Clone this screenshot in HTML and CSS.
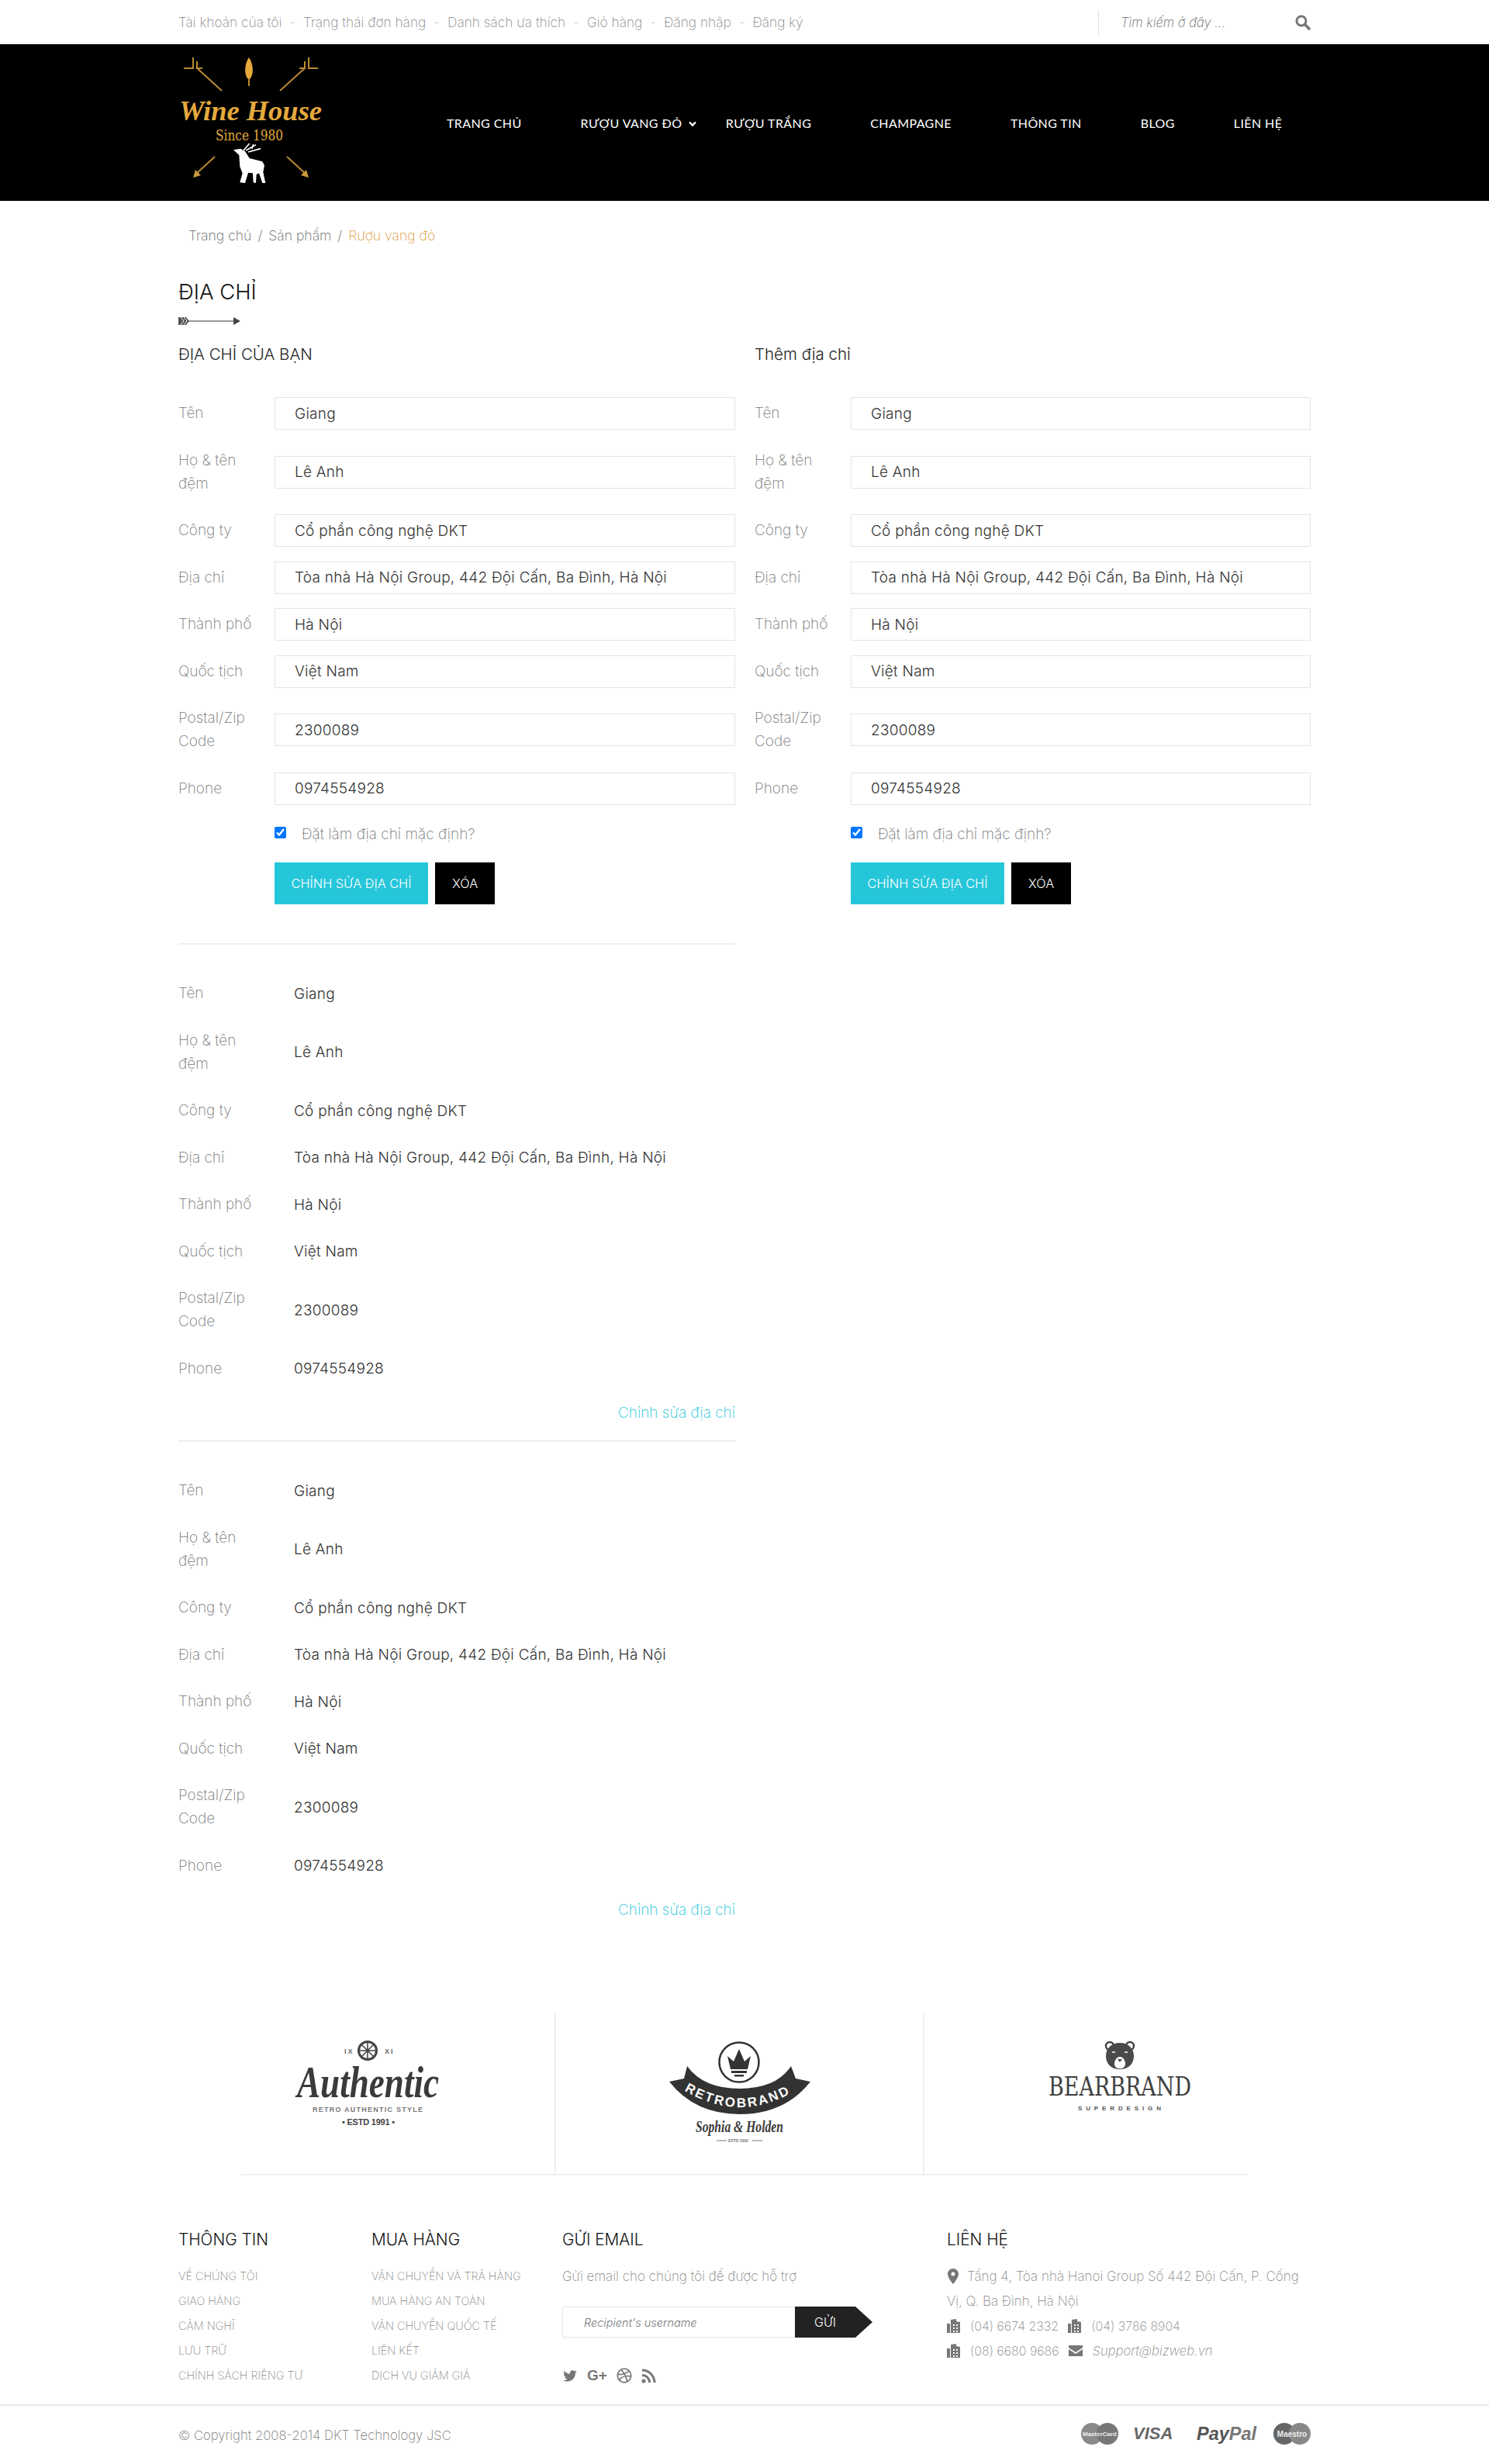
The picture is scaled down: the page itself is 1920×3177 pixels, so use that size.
FILE: index.html
```html
<!DOCTYPE html>
<html lang="vi">
<head>
    <meta charset="UTF-8">
    <title>Địa chỉ - Wine House</title>
    <link rel="stylesheet" href="styles.css">
</head>
<body>

    <!-- top bar -->
    <div class="topbar">
        <div class="wrap topbar-inner">
            <ul class="top-links">
                <li>Tài khoản của tôi</li>
                <li>Trạng thái đơn hàng</li>
                <li>Danh sách ưa thích</li>
                <li>Giỏ hàng</li>
                <li>Đăng nhập</li>
                <li>Đăng ký</li>
            </ul>
            <div class="search">
                <input type="text" placeholder="Tìm kiếm ở đây ...">
                <svg width="20" height="20" viewBox="0 0 20 20"><circle cx="8" cy="8" r="6" fill="none" stroke="#777" stroke-width="3"/><path d="M12.5 12.5L18 18" stroke="#777" stroke-width="3.6" stroke-linecap="round"/></svg>
            </div>
        </div>
    </div>

    <!-- header -->
    <div class="header">
        <div class="wrap header-inner">
            <svg class="logo" width="190" height="202" viewBox="0 0 190 202">
                <g stroke="#b98a33" stroke-width="2" fill="none">
                    <path d="M56 60L23 30"/>
                    <path d="M19 17V31H7M24 22V31H31"/>
                    <path d="M131 60L164 30"/>
                    <path d="M168 17V31H180M163 22V31H156"/>
                    <path d="M47 145L22 168"/>
                    <path d="M140 145L165 168"/>
                </g>
                <path d="M19 172L22 162L29 169Z" fill="#c99a3d"/>
                <path d="M168 172L165 162L158 169Z" fill="#c99a3d"/>
                <path d="M91 17C85 26 84 40 91 46C98 40 97 26 91 17Z" fill="#e5a93c"/>
                <rect x="90" y="44" width="2" height="10" fill="#b98a33"/>
                <text x="1" y="98" class="logo-script" textLength="184" lengthAdjust="spacingAndGlyphs">Wine House</text>
                <text x="48" y="124" class="logo-since" textLength="87" lengthAdjust="spacingAndGlyphs">Since 1980</text>
                <g transform="translate(-20 -7) scale(.3333)">
                    <path d="M273 430L300 425L318 435L335 462L385 475L393 490L388 515L397 558L385 558L372 520L362 525L360 558L350 556L348 520L330 518L318 558L298 556L308 520L298 495L295 450Z" fill="#fff"/>
                    <path d="M312 432L335 405M322 432L360 410M330 438L378 425M345 425L350 408" stroke="#fff" stroke-width="5" fill="none"/>
                </g>
            </svg>
            <ul class="nav">
                <li>Trang chủ</li>
                <li class="has-sub">Rượu vang đỏ
                    <svg width="10" height="8" viewBox="0 0 10 8"><path d="M1 1.5L5 5.5L9 1.5" fill="none" stroke="#fff" stroke-width="2.4"/></svg>
                </li>
                <li>Rượu trắng</li>
                <li>Champagne</li>
                <li>Thông tin</li>
                <li>Blog</li>
                <li>Liên hệ</li>
            </ul>
        </div>
    </div>

    <div class="wrap">
        <div class="breadcrumb">Trang chủ <span>/</span> Sản phẩm <span>/</span> <b>Rượu vang đỏ</b></div>
        <h1 class="page-title">ĐỊA CHỈ</h1>
        <svg class="title-arrow" width="80" height="12" viewBox="0 0 80 12">
            <rect x="10" y="5" width="62" height="2" fill="#999"/>
            <path d="M0 1H10L14 6L10 11H0Z" fill="#555"/>
            <path d="M3 1L7 6L3 11M7 1L11 6L7 11" stroke="#fff" fill="none"/>
            <path d="M71 1L80 6L71 11Z" fill="#444"/>
        </svg>

        <div class="columns">
            <!-- left column: saved addresses -->
            <div>
                <h3 class="col-title">ĐỊA CHỈ CỦA BẠN</h3>

                <form class="address-form">
                    <div class="row"><label>Tên</label><input type="text" value="Giang"></div>
                    <div class="row tall"><label>Họ &amp; tên đệm</label><input type="text" value="Lê Anh"></div>
                    <div class="row"><label>Công ty</label><input type="text" value="Cổ phần công nghệ DKT"></div>
                    <div class="row"><label>Địa chỉ</label><input type="text" value="Tòa nhà Hà Nội Group, 442 Đội Cấn, Ba Đình, Hà Nội"></div>
                    <div class="row"><label>Thành phố</label><input type="text" value="Hà Nội"></div>
                    <div class="row"><label>Quốc tịch</label><input type="text" value="Việt Nam"></div>
                    <div class="row tall"><label>Postal/Zip Code</label><input type="text" value="2300089"></div>
                    <div class="row"><label>Phone</label><input type="text" value="0974554928"></div>
                    <div class="check-row"><input type="checkbox" checked><span>Đặt làm địa chỉ mặc định?</span></div>
                    <div class="btn-row"><button type="button" class="btn-teal">CHỈNH SỬA ĐỊA CHỈ</button><button type="button" class="btn-black">XÓA</button></div>
                </form>

                <div class="address-block">
                    <div class="row"><label>Tên</label><div class="val">Giang</div></div>
                    <div class="row tall"><label>Họ &amp; tên đệm</label><div class="val">Lê Anh</div></div>
                    <div class="row"><label>Công ty</label><div class="val">Cổ phần công nghệ DKT</div></div>
                    <div class="row"><label>Địa chỉ</label><div class="val">Tòa nhà Hà Nội Group, 442 Đội Cấn, Ba Đình, Hà Nội</div></div>
                    <div class="row"><label>Thành phố</label><div class="val">Hà Nội</div></div>
                    <div class="row"><label>Quốc tịch</label><div class="val">Việt Nam</div></div>
                    <div class="row tall"><label>Postal/Zip Code</label><div class="val">2300089</div></div>
                    <div class="row"><label>Phone</label><div class="val">0974554928</div></div>
                    <a class="edit-link">Chỉnh sửa địa chỉ</a>
                </div>

                <div class="address-block">
                    <div class="row"><label>Tên</label><div class="val">Giang</div></div>
                    <div class="row tall"><label>Họ &amp; tên đệm</label><div class="val">Lê Anh</div></div>
                    <div class="row"><label>Công ty</label><div class="val">Cổ phần công nghệ DKT</div></div>
                    <div class="row"><label>Địa chỉ</label><div class="val">Tòa nhà Hà Nội Group, 442 Đội Cấn, Ba Đình, Hà Nội</div></div>
                    <div class="row"><label>Thành phố</label><div class="val">Hà Nội</div></div>
                    <div class="row"><label>Quốc tịch</label><div class="val">Việt Nam</div></div>
                    <div class="row tall"><label>Postal/Zip Code</label><div class="val">2300089</div></div>
                    <div class="row"><label>Phone</label><div class="val">0974554928</div></div>
                    <a class="edit-link">Chỉnh sửa địa chỉ</a>
                </div>
            </div>

            <!-- right column: new address -->
            <div>
                <h3 class="col-title">Thêm địa chỉ</h3>

                <form class="address-form">
                    <div class="row"><label>Tên</label><input type="text" value="Giang"></div>
                    <div class="row tall"><label>Họ &amp; tên đệm</label><input type="text" value="Lê Anh"></div>
                    <div class="row"><label>Công ty</label><input type="text" value="Cổ phần công nghệ DKT"></div>
                    <div class="row"><label>Địa chỉ</label><input type="text" value="Tòa nhà Hà Nội Group, 442 Đội Cấn, Ba Đình, Hà Nội"></div>
                    <div class="row"><label>Thành phố</label><input type="text" value="Hà Nội"></div>
                    <div class="row"><label>Quốc tịch</label><input type="text" value="Việt Nam"></div>
                    <div class="row tall"><label>Postal/Zip Code</label><input type="text" value="2300089"></div>
                    <div class="row"><label>Phone</label><input type="text" value="0974554928"></div>
                    <div class="check-row"><input type="checkbox" checked><span>Đặt làm địa chỉ mặc định?</span></div>
                    <div class="btn-row"><button type="button" class="btn-teal">CHỈNH SỬA ĐỊA CHỈ</button><button type="button" class="btn-black">XÓA</button></div>
                </form>
            </div>
        </div>
    </div>

    <!-- brand logos -->
    <div class="brands">
        <div class="brand brand-1">
            <svg width="405" height="209" viewBox="0 0 405 209">
                <g fill="none" stroke="#444">
                    <circle cx="163" cy="48" r="11.5" stroke-width="3"/>
                    <path d="M163 36V60M151 48H175M155 40L171 56M171 40L155 56" stroke-width="1.6"/>
                </g>
                <text x="133" y="52" class="brand-small" fill="#666">IX</text>
                <text x="185" y="52" class="brand-small" fill="#666">XI</text>
                <text x="72" y="108" class="brand-script" font-size="56" textLength="183" lengthAdjust="spacingAndGlyphs">Authentic</text>
                <text x="92" y="127" class="brand-small" fill="#777" textLength="144">RETRO AUTHENTIC STYLE</text>
                <text x="130" y="144" class="brand-small estd" fill="#444" textLength="69">• ESTD 1991 •</text>
            </svg>
        </div>
        <div class="brand brand-2">
            <svg width="475" height="209" viewBox="0 0 475 209">
                <ellipse cx="236" cy="63" rx="25.5" ry="25.5" fill="none" stroke="#333" stroke-width="2.5"/>
                <path d="M221 55L229 62L236 46L243 62L251 55L247 72H225Z" fill="#333"/>
                <rect x="226" y="74" width="20" height="3" fill="#333"/>
                <rect x="230" y="79" width="12" height="2.5" fill="#333"/>
                <path d="M146 88L165 84L169 68Q190 97 237 97Q284 97 303 68L309 84L328 88Q295 130 237 130Q179 130 146 88Z" fill="#333"/>
                <path id="retroCurve" d="M160 96Q237 146 314 96" fill="none"/>
                <text class="retro-text"><textPath href="#retroCurve" startOffset="6">RETROBRAND</textPath></text>
                <text x="180" y="153" class="brand-script" font-size="20" fill="#555" textLength="113" lengthAdjust="spacingAndGlyphs">Sophia &amp; Holden</text>
                <path d="M207 164H220M253 164H266" stroke="#777"/>
                <text x="222" y="166" class="tiny-text">ESTD 2002</text>
            </svg>
        </div>
        <div class="brand brand-3">
            <svg width="418" height="209" viewBox="0 0 418 209">
                <circle cx="239" cy="42" r="5" fill="#fff" stroke="#444" stroke-width="2.5"/>
                <circle cx="265" cy="42" r="5" fill="#fff" stroke="#444" stroke-width="2.5"/>
                <path d="M252 38C264 38 270 46 270 55C270 66 262 72 252 72C242 72 234 66 234 55C234 46 240 38 252 38Z" fill="#4a4a4a"/>
                <path d="M252 56C257 56 259 62 259 65C259 69 256 71 252 71C248 71 245 69 245 65C245 62 247 56 252 56Z" fill="#fff"/>
                <path d="M249 59H255L252 63Z" fill="#4a4a4a"/>
                <path d="M242 50H246M258 50H262" stroke="#fff" stroke-width="1.4"/>
                <text x="160" y="106" class="bear-text" textLength="184" lengthAdjust="spacingAndGlyphs">BEARBRAND</text>
                <text x="198" y="125" class="brand-small bear-sub" fill="#555" textLength="109">SUPERDESIGN</text>
            </svg>
        </div>
    </div>

    <!-- footer -->
    <div class="wrap footer-cols">
        <div>
            <h4>THÔNG TIN</h4>
            <ul>
                <li>VỀ CHÚNG TÔI</li>
                <li>GIAO HÀNG</li>
                <li>CẢM NGHĨ</li>
                <li>LƯU TRỮ</li>
                <li>CHÍNH SÁCH RIÊNG TƯ</li>
            </ul>
        </div>
        <div>
            <h4>MUA HÀNG</h4>
            <ul>
                <li>VẬN CHUYỂN VÀ TRẢ HÀNG</li>
                <li>MUA HÀNG AN TOÀN</li>
                <li>VẬN CHUYỂN QUỐC TẾ</li>
                <li>LIÊN KẾT</li>
                <li>DỊCH VỤ GIẢM GIÁ</li>
            </ul>
        </div>
        <div>
            <h4>GỬI EMAIL</h4>
            <p class="mail-text">Gửi email cho chúng tôi để được hỗ trợ</p>
            <div class="subscribe">
                <input type="text" placeholder="Recipient's username">
                <button type="button">GỬI</button>
            </div>
            <div class="social">
                <svg width="20" height="20" viewBox="0 0 24 24"><path d="M22.46 6c-.77.35-1.6.58-2.46.69.88-.53 1.56-1.37 1.88-2.38-.83.5-1.75.85-2.72 1.05C18.37 4.5 17.26 4 16 4c-2.35 0-4.27 1.92-4.27 4.29 0 .34.04.67.11.98C8.28 9.09 5.11 7.38 3 4.79c-.37.63-.58 1.37-.58 2.15 0 1.49.75 2.81 1.91 3.56-.71 0-1.37-.2-1.95-.5v.03c0 2.08 1.48 3.82 3.44 4.21a4.22 4.22 0 0 1-1.93.07 4.28 4.28 0 0 0 4 2.98 8.521 8.521 0 0 1-5.33 1.84c-.34 0-.68-.02-1.02-.06C3.44 20.29 5.7 21 8.12 21 16 21 20.33 14.46 20.33 8.79c0-.19 0-.37-.01-.56.84-.6 1.56-1.36 2.14-2.23z" fill="#777"/></svg>
                <span class="gplus">G+</span>
                <svg width="20" height="20" viewBox="0 0 20 20" fill="none" stroke="#777" stroke-width="1.7"><circle cx="10" cy="10" r="8.8"/><path d="M6 2.2C10 7 13 13 14 18.2M1.5 8.5C7 9 13 7.5 16 3.5M3.5 16C6 11.5 12 9.5 18.8 11"/></svg>
                <svg width="19" height="19" viewBox="0 0 19 19" fill="none" stroke="#777" stroke-width="3"><circle cx="3" cy="16" r="2.6" fill="#777" stroke="none"/><path d="M1 8.5A9.5 9.5 0 0 1 10.5 18M1 2A16 16 0 0 1 17 18"/></svg>
            </div>
        </div>
        <div class="contact">
            <h4>LIÊN HỆ</h4>
            <p class="contact-line">
                <svg class="ico-pin" width="16" height="20" viewBox="5 2 14 20"><path d="M12 2C8.13 2 5 5.13 5 9c0 5.25 7 13 7 13s7-7.75 7-13c0-3.87-3.13-7-7-7zm0 9.5a2.5 2.5 0 1 1 0-5 2.5 2.5 0 0 1 0 5z" fill="#777"/></svg>Tầng 4, Tòa nhà Hanoi Group Số 442 Đội Cấn, P. Cống Vị, Q. Ba Đình, Hà Nội
            </p>
            <p class="contact-items">
                <svg class="ico" width="19" height="18" viewBox="0 0 19 18"><use href="#fax"/></svg><span class="w1">(04) 6674 2332</span>
                <svg class="ico" width="19" height="18" viewBox="0 0 19 18"><use href="#fax"/></svg><span>(04) 3786 8904</span>
            </p>
            <p class="contact-items">
                <svg class="ico" width="19" height="18" viewBox="0 0 19 18"><use href="#fax"/></svg><span class="w2">(08) 6680 9686</span>
                <svg class="ico" width="18" height="14" viewBox="0 0 18 14"><path d="M0 0H18V3L9 9L0 3ZM0 5L9 11L18 5V14H0Z" fill="#777"/></svg><em>Support@bizweb.vn</em>
            </p>
        </div>
    </div>

    <div class="footer-bottom">
        <div class="wrap footer-bottom-inner">
            <div class="copyright">© Copyright 2008-2014 DKT Technology JSC</div>
            <div class="pay">
                <svg width="48" height="28" viewBox="0 0 48 28"><circle cx="14" cy="14" r="14" fill="#8a8a8a"/><circle cx="34" cy="14" r="14" fill="#777"/><text x="24" y="17" class="pay-small">MasterCard</text></svg>
                <span class="visa">VISA</span>
                <span class="paypal">Pay<i>Pal</i></span>
                <svg width="48" height="28" viewBox="0 0 48 28"><circle cx="14" cy="14" r="14" fill="#666"/><circle cx="34" cy="14" r="14" fill="#888"/><text x="24" y="18" class="pay-small maestro">Maestro</text></svg>
            </div>
        </div>
    </div>

    <!-- shared phone icon -->
    <svg class="defs" width="0" height="0"><defs><g id="fax"><rect x="0" y="6" width="4" height="12" fill="#777"/><path d="M5 18V1L12 0V3L17 4V18Z" fill="#777"/><path d="M8 7H10V9H8ZM12 7H14V9H12ZM8 11H10V13H8ZM12 11H14V13H12ZM8 15H10V17H8ZM12 15H14V17H12Z" fill="#fff"/></g></defs></svg>

</body>
</html>
```

FILE: styles.css
```css
* {
    box-sizing: border-box;
}

body {
    margin: 0;
    font-family: "Inter", "Liberation Sans", sans-serif;
    font-weight: 200;
    font-size: 19px;
    color: #777;
    background: #fff;
}

ul {
    list-style: none;
    margin: 0;
    padding: 0;
}

.wrap {
    width: 1460px;
    margin: 0 auto;
}

/* top bar */
.topbar-inner {
    height: 57px;
    display: flex;
    justify-content: space-between;
    align-items: center;
}

.top-links {
    display: flex;
    font-size: 17.3px;
    color: #888;
}

.top-links li + li::before {
    content: "-";
    margin: 0 10px;
    color: #bbb;
}

.search {
    width: 274px;
    height: 32px;
    border-left: 1px solid #ddd;
    display: flex;
    align-items: center;
    justify-content: space-between;
    padding-left: 28px;
}

.search input {
    border: 0;
    outline: 0;
    width: 200px;
    padding: 0;
    font: italic 200 16.6px "Inter", sans-serif;
}

.search input::placeholder {
    color: #666;
}

/* header */
.header {
    background: #000;
    height: 202px;
}

.header-inner {
    display: flex;
    align-items: center;
    height: 202px;
}

.logo {
    display: block;
    flex: none;
}

.logo-script {
    font: italic 700 36px "Liberation Serif", serif;
    fill: #e5a93c;
}

.logo-since {
    font: 400 19px "DejaVu Serif", serif;
    fill: #e5a93c;
}

.nav {
    display: flex;
    gap: 76px;
    margin-left: 156px;
    font-family: "Lato", sans-serif;
    font-size: 16px;
    font-weight: 400;
    letter-spacing: .4px;
    color: #fff;
    text-transform: uppercase;
}

.nav .has-sub {
    margin-right: -38px;
}

.nav svg {
    margin-left: 4px;
    vertical-align: 1px;
}

/* page head */
.breadcrumb {
    padding: 30px 0 0 13px;
    line-height: 30px;
    font-size: 17.6px;
    color: #666;
}

.breadcrumb span {
    margin: 0 3px;
}

.breadcrumb b {
    font-weight: 200;
    color: #e09a3e;
}

.page-title {
    margin: 37px 0 0;
    font-size: 27.5px;
    line-height: 40px;
    font-weight: 300;
    color: #111;
}

.title-arrow {
    display: block;
    margin-top: 12px;
}

.columns {
    display: grid;
    grid-template-columns: 718px 717px;
    gap: 25px;
}

.col-title {
    margin: 22px 0 40px;
    font-size: 20.5px;
    line-height: 30px;
    font-weight: 300;
    color: #222;
}

/* form and address rows */
.row {
    display: flex;
    align-items: center;
    min-height: 42px;
    margin-bottom: 18.5px;
}

.row.tall {
    min-height: 72px;
}

.row label {
    flex: none;
    width: 124px;
    padding-right: 10px;
    line-height: 30px;
}

.row input {
    flex: 1;
    min-width: 0;
    height: 42px;
    padding: 0 25px;
    border: 1px solid #e4e4e4;
    outline: 0;
    font: 300 19px "Inter", sans-serif;
    letter-spacing: .25px;
    color: #333;
}

.val {
    padding-left: 25px;
    font-weight: 300;
    letter-spacing: .25px;
    color: #333;
}

.check-row {
    display: flex;
    align-items: center;
    height: 30px;
    margin: 22.5px 0 0 124px;
}

.check-row input {
    width: 15px;
    height: 15px;
    margin: 0 20px 3px 0;
}

.btn-row {
    display: flex;
    gap: 9px;
    margin: 22px 0 0 124px;
}

.btn-row button {
    height: 54px;
    border: 0;
    color: #fff;
    font: 300 16.3px "Inter", sans-serif;
}

.btn-teal {
    width: 198px;
    background: #26c6da;
}

.btn-black {
    width: 77px;
    background: #000;
}

.address-form {
    padding-bottom: 50px;
}

.address-block {
    border-top: 2px solid #eee;
    padding-top: 42px;
    padding-bottom: 20px;
}

.edit-link {
    display: block;
    margin-top: 21.5px;
    line-height: 30px;
    text-align: right;
    color: #26c6da;
}

/* brands */
.brands {
    width: 1298px;
    height: 209px;
    margin: 98px 0 0 311px;
    display: flex;
    border-bottom: 2px solid #f0f0f0;
}

.brand {
    height: 209px;
}

.brand svg {
    display: block;
}

.brand-1 {
    width: 405.5px;
    border-right: 2px solid #eee;
}

.brand-2 {
    width: 475px;
    border-right: 2px solid #eee;
}

.brand-3 {
    width: 417.5px;
}

.brand-script {
    font-family: "Liberation Serif", serif;
    font-style: italic;
    font-weight: 700;
    fill: #3a3a3a;
}

.brand-small {
    font: 700 9px "Liberation Sans", sans-serif;
    letter-spacing: 2px;
}

.brand-small.estd {
    font-size: 11px;
    letter-spacing: 1px;
}

.retro-text {
    font: 700 17px "Liberation Sans", sans-serif;
    letter-spacing: 2.5px;
    fill: #fff;
}

.tiny-text {
    font: 700 5px "Liberation Sans", sans-serif;
    fill: #777;
}

.bear-text {
    font: 400 34px "DejaVu Serif", serif;
    fill: #3f3f3f;
}

.bear-sub {
    font-size: 8px;
}

/* footer */
.footer-cols {
    display: grid;
    grid-template-columns: 249px 246px 496px 469px;
    padding-top: 68px;
}

.footer-cols h4 {
    margin: 0 0 16px;
    font-size: 20.8px;
    line-height: 30px;
    font-weight: 300;
    color: #111;
}

.footer-cols ul {
    font-size: 14.4px;
}

.footer-cols li {
    line-height: 32px;
    color: #888;
}

.mail-text {
    margin: 0;
    font-size: 17px;
    line-height: 32px;
    color: #888;
}

.subscribe {
    display: flex;
    margin-top: 23px;
    height: 40px;
}

.subscribe input {
    width: 300px;
    height: 40px;
    padding: 0 27px;
    border: 1px solid #e4e4e4;
    border-right: 0;
    outline: 0;
    font: italic 300 14.5px "Inter", sans-serif;
}

.subscribe input::placeholder {
    color: #777;
}

.subscribe button {
    width: 100px;
    height: 40px;
    border: 0;
    padding: 0 22px 0 0;
    color: #fff;
    font: 300 16px "Inter", sans-serif;
    background: #222;
    clip-path: polygon(0 0, 78px 0, 100% 50%, 78px 100%, 0 100%);
}

.social {
    display: flex;
    align-items: center;
    gap: 12px;
    margin-top: 38px;
}

.gplus {
    width: 26px;
    font: 700 19px "Liberation Sans", sans-serif;
    color: #777;
}

.contact p {
    margin: 0;
    font-size: 17px;
    line-height: 32px;
    color: #888;
}

.ico-pin {
    margin-right: 10px;
    vertical-align: -4px;
}

.contact .contact-items {
    display: flex;
    align-items: center;
    font-size: 16px;
}

.ico {
    flex: none;
    margin-right: 11px;
}

.contact-items .w1 {
    margin-right: 12px;
}

.contact-items .w2 {
    margin-right: 12px;
}

.contact-items em {
    margin-left: 2px;
    font-size: 16.7px;
}

.footer-bottom {
    margin-top: 21px;
    border-top: 2px solid #e8e8e8;
    height: 74px;
}

.footer-bottom-inner {
    height: 72px;
    display: flex;
    justify-content: space-between;
    align-items: center;
}

.copyright {
    padding-top: 4px;
    font-size: 16.7px;
    color: #777;
}

.pay {
    display: flex;
    align-items: center;
    gap: 19px;
}

.pay-small {
    font: 700 8px "Liberation Sans", sans-serif;
    fill: #eee;
    text-anchor: middle;
}

.pay-small.maestro {
    font-size: 10px;
}

.visa {
    width: 52px;
    margin-right: 11px;
    font: italic 700 22px "Liberation Sans", sans-serif;
    color: #666;
}

.paypal {
    width: 78px;
    margin-right: 2px;
    font: italic 700 23.5px "Liberation Sans", sans-serif;
    color: #555;
}

.paypal i {
    color: #777;
}

.defs {
    position: absolute;
}
```
